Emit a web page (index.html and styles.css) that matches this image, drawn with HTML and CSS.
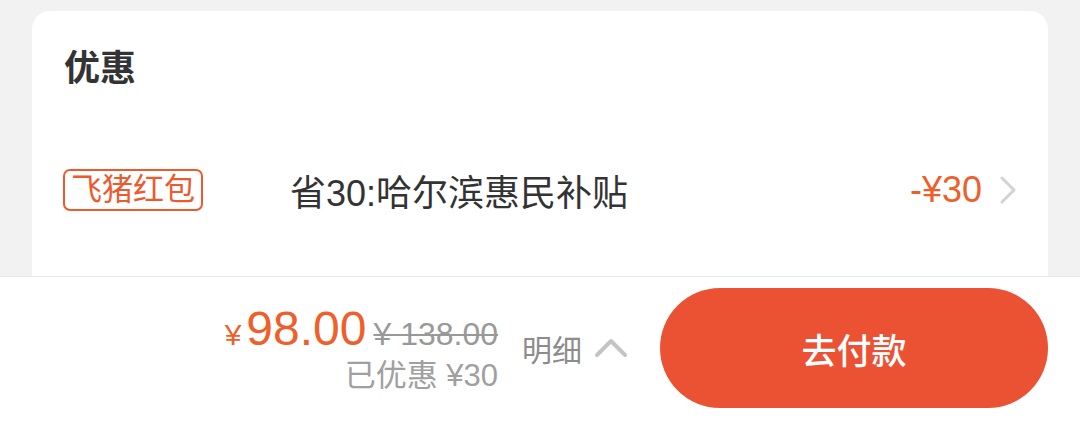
FILE: index.html
```html
<!DOCTYPE html>
<html lang="zh-CN">
<head>
<meta charset="utf-8">
<title>优惠</title>
<link rel="stylesheet" href="styles.css">
</head>
<body>
<main class="page">
  <section class="card">
    <h2 class="card-title">优惠</h2>
    <div class="promo-row">
      <div class="promo-label"><span class="tag">飞猪红包</span></div>
      <div class="promo-desc">省30:哈尔滨惠民补贴</div>
      <div class="promo-amount">-¥30</div>
      <svg class="chev-right" width="16" height="28" viewBox="0 0 16 28" aria-hidden="true">
        <path d="M2 2 L14 14 L2 26" fill="none" stroke="#d3d3d3" stroke-width="3" stroke-linecap="round" stroke-linejoin="round"/>
      </svg>
    </div>
  </section>
</main>
<footer class="paybar">
  <div class="price-block">
    <div class="price-line">
      <span class="cur">¥</span><span class="price">98.00</span><span class="orig">¥ 138.00</span>
    </div>
    <div class="saved">已优惠 ¥30</div>
  </div>
  <div class="detail">
    <span>明细</span>
    <svg class="chev-up" width="34" height="20" viewBox="0 0 34 20" aria-hidden="true">
      <path d="M3 17 L17 3 L31 17" fill="none" stroke="#c4c4c4" stroke-width="4" stroke-linecap="round" stroke-linejoin="round"/>
    </svg>
  </div>
  <button class="pay-btn">去付款</button>
</footer>
</body>
</html>
```
FILE: styles.css
```css
html, body {
  margin: 0;
  padding: 0;
  height: 100%;
}
body {
  background: #f2f2f2;
  font-family: "Liberation Sans", "Noto Sans CJK SC", sans-serif;
  overflow: hidden;
}
.page {
  padding: 11px 32px 0;
}
.card {
  box-sizing: border-box;
  height: 416px;
  background: #fff;
  border-radius: 18px;
  padding: 33px 32px 0;
}
.card-title {
  margin: 0;
  font-size: 36px;
  line-height: 50px;
  font-weight: 600;
  color: #333;
}
.promo-row {
  margin-top: 46px;
  height: 100px;
  display: flex;
  align-items: center;
}
.promo-label {
  width: 226px;
  flex: none;
}
.tag {
  display: inline-block;
  box-sizing: border-box;
  height: 42px;
  line-height: 38px;
  padding: 0 6px;
  margin-left: -1px;
  border: 2px solid #ec5a2e;
  border-radius: 7px;
  color: #ec5a2e;
  font-size: 31px;
}
.promo-desc {
  flex: 1;
  font-size: 36px;
  color: #333;
}
.promo-amount {
  font-size: 36px;
  color: #ee5f2b;
  margin-right: 18px;
}
.chev-right {
  display: block;
}
.paybar {
  position: fixed;
  left: 0;
  right: 0;
  bottom: 0;
  box-sizing: border-box;
  height: 151px;
  background: #fff;
  border-top: 1px solid #e6e6e6;
  display: flex;
  align-items: center;
  justify-content: flex-end;
  padding: 0 32px 8px 0;
}
.price-block {
  display: flex;
  flex-direction: column;
  align-items: flex-end;
}
.price-line {
  display: flex;
  align-items: baseline;
  line-height: 50px;
  padding-top: 3px;
}
.cur {
  font-size: 30px;
  color: #ee5f2b;
  margin-right: 5px;
}
.price {
  font-size: 48px;
  color: #ee5f2b;
}
.orig {
  font-size: 32px;
  color: #999;
  margin-left: 7px;
  text-decoration: line-through;
  text-decoration-thickness: 2px;
}
.saved {
  margin-top: -3px;
  font-size: 31px;
  line-height: 38px;
  color: #a0a0a0;
}
.detail {
  display: flex;
  align-items: center;
  margin-left: 24px;
  font-size: 30px;
  color: #8c8c8c;
}
.chev-up {
  display: block;
  margin-left: 12px;
}
.pay-btn {
  margin-left: 32px;
  width: 388px;
  height: 120px;
  border: none;
  border-radius: 60px;
  background: #eb5233;
  color: #fff;
  font-family: "Liberation Sans", "Noto Sans CJK SC", sans-serif;
  font-size: 35px;
  font-weight: 500;
  padding: 0;
}
```
